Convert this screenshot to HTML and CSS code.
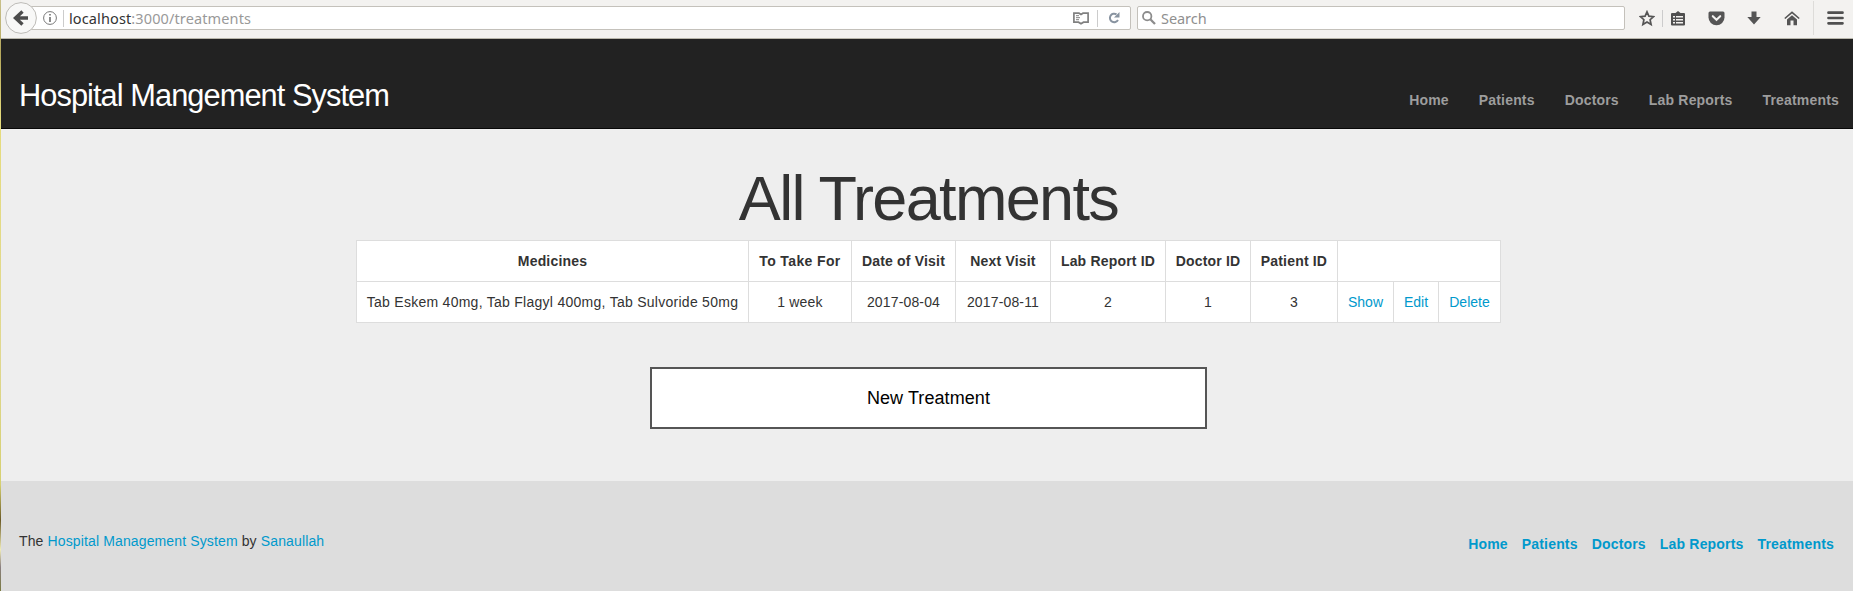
FILE: index.html
```html
<!DOCTYPE html>
<html lang="en">
<head>
<meta charset="utf-8">
<title>Hospital Mangement System</title>
<link rel="stylesheet" href="styles.css">
</head>
<body>
<div class="desktop-edge"></div>
<div class="window">
  <div class="toolbar">
    <div class="back">
      <svg width="32" height="32" viewBox="0 0 32 32"><circle cx="16" cy="16" r="15.4" fill="#f8f8f7" stroke="#bdbbb7"/><path d="M17.500 9.500L10.500 16L17.500 22.500M11 16H23" fill="none" stroke="#4c4c4c" stroke-width="3.400"/></svg>
    </div>
    <div class="urlbar">
      <svg class="info" width="14" height="14" viewBox="0 0 14 14"><circle cx="7" cy="7" r="6.400" fill="none" stroke="#777"/><path d="M7 6v5M7 3v1.600" stroke="#777" stroke-width="1.700"/></svg>
      <i class="sep"></i>
      <span class="url"><b>localhost</b>:3000/treatments</span>
      <svg class="reader" width="16" height="13" viewBox="0 0 16 13"><path d="M.9 1.200H6L8 2.400L10 1.200H15.100V10.200H10.500L8 11.800L5.500 10.200H.9Z" fill="none" stroke="#808080" stroke-width="1.700"/><path d="M3 3.700h3M3 5.700h4M3 7.700h3" stroke="#808080"/></svg>
      <i class="sep"></i>
      <svg class="reload" width="12" height="12" viewBox="0 0 12 12"><path d="M8.500 2.300A4.300 4.300 0 1 0 10 8" fill="none" stroke="#8893a0" stroke-width="2"/><path d="M11.500 0V5.500H6Z" fill="#8893a0"/></svg>
    </div>
    <div class="search">
      <svg width="14" height="14" viewBox="0 0 14 14"><circle cx="5.200" cy="5.200" r="4.200" fill="none" stroke="#8c8c8c" stroke-width="1.800"/><path d="M8.300 8.300L13 13" stroke="#8c8c8c" stroke-width="2.300"/></svg>
      <span>Search</span>
    </div>
    <div class="tools">
      <svg width="16" height="17" viewBox="0 0 16 17"><path d="M8 1.800L9.900 6.100L14.600 6.600L11.100 9.700L12.100 14.500L8 12L3.900 14.500L4.900 9.700L1.400 6.600L6.100 6.100Z" fill="none" stroke="#555" stroke-width="1.700"/></svg>
      <i class="sep"></i>
      <svg width="14" height="15" viewBox="0 0 14 15"><path d="M1 2h3.500L7 0l2.500 2H13q1 0 1 1v10.500q0 1-1 1H1q-1 0-1-1V3q0-1 1-1Z" fill="#505050"/><path d="M2 5h2v1.500H2zM5 5h7v1.500H5zM2 8h2v1.500H2zM5 8h7v1.500H5zM2 11h2v1.500H2zM5 11h7v1.500H5z" fill="#f3f2f0"/></svg>
      <svg width="17" height="15" viewBox="0 0 17 15"><path d="M2 .5H15Q16.500 .5 16.500 2V6.500A8 7.800 0 0 1 .5 6.500V2Q.5 .5 2 .5Z" fill="#555"/><path d="M4.800 5.200L8.500 8.700L12.200 5.200" fill="none" stroke="#f3f2f0" stroke-width="2.100" stroke-linecap="round"/></svg>
      <svg width="14" height="14" viewBox="0 0 14 14"><path d="M4.500 .5H9.500V6H13.700L7 13.500L.3 6H4.500Z" fill="#555"/></svg>
      <svg width="16" height="15" viewBox="0 0 16 15"><path d="M.8 7.500L8 1.300L15.200 7.500" fill="none" stroke="#555" stroke-width="1.600"/><path d="M3 8.500L8 4.200L13 8.500V14.300H9.500V9.500H6.500V14.300H3Z" fill="#555"/></svg>
      <i class="sep tall"></i>
      <svg width="17" height="14" viewBox="0 0 17 14"><path d="M1.500 1.700H15.500M1.500 7H15.500M1.500 12.300H15.500" stroke="#505050" stroke-width="2.700" stroke-linecap="round"/></svg>
    </div>
  </div>
  <header class="header">
    <div class="logo">Hospital Mangement System</div>
    <nav class="main-nav"><a>Home</a><a>Patients</a><a>Doctors</a><a>Lab Reports</a><a>Treatments</a></nav>
  </header>
  <main class="content">
    <h1>All Treatments</h1>
    <table class="treatments">
      <colgroup><col class="c-med"><col class="c-for"><col class="c-date"><col class="c-next"><col class="c-lab"><col class="c-doc"><col class="c-pat"><col class="c-show"><col class="c-edit"><col class="c-del"></colgroup>
      <tr><th>Medicines</th><th class="for">To Take For</th><th>Date of Visit</th><th>Next Visit</th><th>Lab Report ID</th><th>Doctor ID</th><th>Patient ID</th><th colspan="3"></th></tr>
      <tr><td class="med">Tab Eskem 40mg, Tab Flagyl 400mg, Tab Sulvoride 50mg</td><td>1 week</td><td>2017-08-04</td><td>2017-08-11</td><td>2</td><td>1</td><td>3</td><td><a>Show</a></td><td><a>Edit</a></td><td><a>Delete</a></td></tr>
    </table>
    <div class="new-btn">New Treatment</div>
  </main>
  <footer class="footer">
    <div class="credit">The <a>Hospital Management System</a> by <a>Sanaullah</a></div>
    <nav class="foot-nav"><a>Home</a><a>Patients</a><a>Doctors</a><a>Lab Reports</a><a>Treatments</a></nav>
  </footer>
</div>
</body>
</html>
```
FILE: styles.css
```css
* { box-sizing: border-box; }
body {
  margin: 0;
  height: 591px;
  display: flex;
  overflow: hidden;
  font: 14px/20px "Liberation Sans", Arial, sans-serif;
  color: #333;
}
.desktop-edge {
  width: 1px;
  background: linear-gradient(#c9c08a, #b5a85c 9%, #e6dc7c 20%, #e0d890 60%, #d6d070 82%, #6b5a26 88%, #f0ecb8 93%, #8a7f80 96%, #7a7a40);
}
.window { flex: 1; display: flex; flex-direction: column; }
svg { display: block; flex: none; }

/* Browser toolbar */
.toolbar {
  height: 39px;
  display: flex;
  align-items: flex-start;
  background: #f3f2f0;
  border-bottom: 1px solid #b9b7ac;
  font: 15px/22px "Noto Sans", "Open Sans", sans-serif;
}
.back { width: 32px; margin: 2px 0 0 4px; z-index: 1; }
.urlbar, .search {
  height: 24px;
  margin-top: 6px;
  display: flex;
  align-items: center;
  background: #fff;
  border: 1px solid #c4c1bb;
  border-radius: 2px;
}
.urlbar { width: 1101px; margin-left: -7px; padding: 0 10px 0 12px; }
.sep { width: 1px; height: 17px; background: #ccc; }
.info { margin-right: 6px; }
.url { flex: 1; padding-left: 5px; color: #999; font-size: 14.5px; letter-spacing: .12px; }
.url b { font-weight: 400; color: #333; }
.reader { margin-right: 8px; }
.reload { margin-left: 10px; }
.search { width: 488px; margin-left: 6px; padding-left: 4px; color: #8f8f8f; font-size: 14.5px; }
.search span { margin-left: 5px; letter-spacing: -.05px; }
.tools { display: flex; align-items: center; flex: 1; height: 36px; padding-left: 14px; }
.tools svg:nth-of-type(2) { margin: 0 23px 0 8px; }
.tools svg:nth-of-type(3) { margin-right: 22px; }
.tools svg:nth-of-type(4) { margin-right: 23px; }
.tools svg:nth-of-type(5) { margin-right: 13px; }
.tools .sep { margin-left: 7px; }
.tools .tall { height: 34px; margin: 0 13px 0 0; background: #dddcd9; }

/* Page header */
.header {
  height: 90px;
  display: flex;
  justify-content: space-between;
  background: #222;
  border-bottom: 1px solid #080808;
}
.logo { margin: 37px 0 0 18px; font-size: 30.8px; line-height: 40px; letter-spacing: -.95px; color: #fff; }
.main-nav { display: flex; gap: 30px; margin: 51px 14px 0 0; font-weight: 700; letter-spacing: .18px; color: #9d9d9d; }

/* Main content */
.content {
  height: 352px;
  display: flex;
  flex-direction: column;
  align-items: center;
  background: #eee;
}
h1 { margin: 33px 0 0 3px; font-size: 63px; font-weight: 400; line-height: 72px; letter-spacing: -1.67px; }
.treatments {
  width: 1145px;
  margin: 6px 0 0 3px;
  table-layout: fixed;
  border-collapse: collapse;
  background: #fff;
  text-align: center;
  white-space: nowrap;
}
.treatments th, .treatments td { height: 41px; padding: 0; border: 1px solid #ddd; }
.treatments th { letter-spacing: .18px; }
.treatments td { letter-spacing: .15px; }
.treatments .for { letter-spacing: .38px; }
.treatments .med { letter-spacing: .27px; }
.treatments td a { letter-spacing: 0; }
.c-med { width: 392px; }
.c-for { width: 103px; }
.c-date { width: 104px; }
.c-next { width: 95px; }
.c-lab { width: 115px; }
.c-doc { width: 85px; }
.c-pat { width: 87px; }
.c-show { width: 56px; }
.c-edit { width: 45px; }
.c-del { width: 62px; }
.treatments a, .footer a { color: #0099cc; }
.new-btn {
  width: 557px;
  height: 62px;
  margin: 44px 0 0 3px;
  background: #fff;
  border: 2px solid #555;
  color: #000;
  font-size: 18px;
  line-height: 58px;
  letter-spacing: .08px;
  text-align: center;
}

/* Footer */
.footer { flex: 1; display: flex; justify-content: space-between; background: #ddd; }
.credit { margin: 50px 0 0 18px; letter-spacing: .13px; }
.foot-nav { display: flex; gap: 14px; margin: 53px 19px 0 0; font-weight: 700; letter-spacing: .18px; }
```
